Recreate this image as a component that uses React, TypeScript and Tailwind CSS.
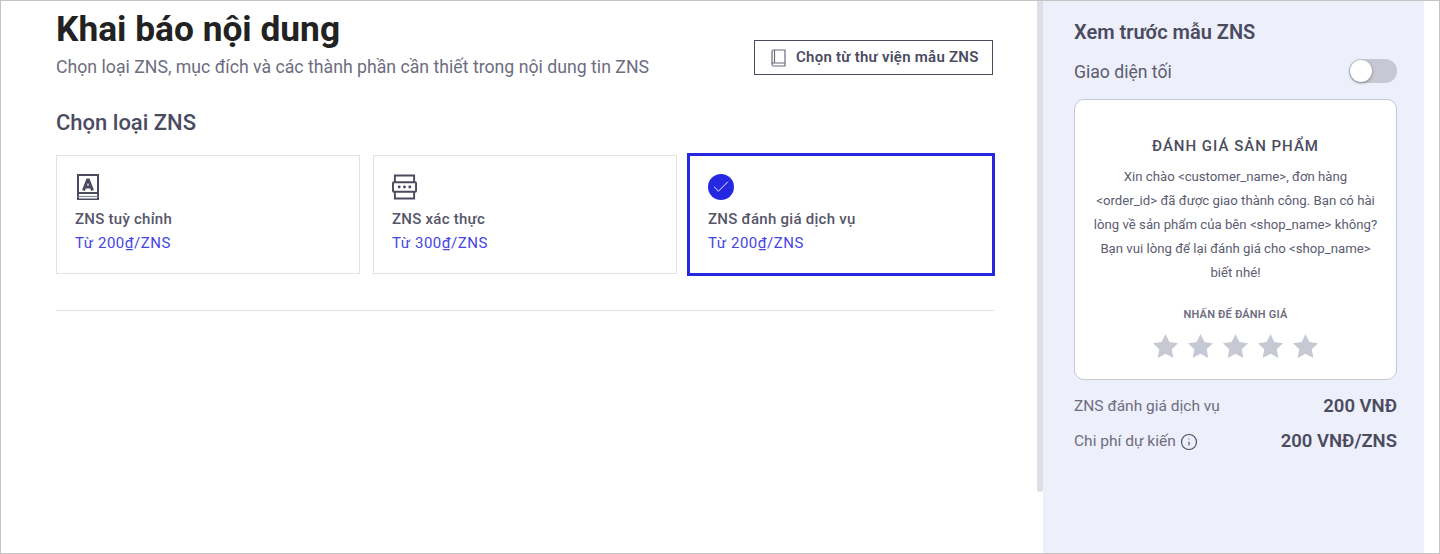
import { Check, Info } from 'lucide-react'

function TemplateIcon() {
  return (
    <svg width="24" height="26" viewBox="0 0 24 26" fill="none">
      <rect x="3" y="1" width="20" height="24.500" stroke="#4b4b60" strokeWidth="2" />
      <path d="M8.500 16.500l4-10.500h1l4 10.500M10 13h6" stroke="#4b4b60" strokeWidth="3" />
      <path d="M3 19h20" stroke="#4b4b60" strokeWidth="2" />
      <path d="M3 22.500h20" stroke="#8a8a9a" strokeWidth="1.200" />
    </svg>
  )
}

function AuthIcon() {
  return (
    <svg width="25" height="26" viewBox="0 0 26 26" fill="none" stroke="#4b4b60" strokeWidth="2">
      <path d="M3 8V1h20v7" />
      <path d="M3 18v7h20v-7" />
      <rect x="1" y="8" width="24" height="10" rx="1" />
      <circle cx="7.500" cy="13" r="1.500" fill="#4b4b60" stroke="none" />
      <circle cx="13" cy="13" r="1.500" fill="#4b4b60" stroke="none" />
      <circle cx="18.500" cy="13" r="1.500" fill="#4b4b60" stroke="none" />
    </svg>
  )
}

function Star() {
  return (
    <svg width="25" height="25" viewBox="0 0 25 25">
      <path d="M12.500 0l3.900 8.100 8.600 1.100-6.300 6 1.600 8.800-7.800-4.300-7.800 4.300 1.600-8.800-6.300-6 8.600-1.100z" fill="#c6c8d3" />
    </svg>
  )
}

function TypeCard({ icon, title, price }: { icon: React.ReactNode; title: string; price: string }) {
  return (
    <div className="w-[304px] h-[119px] flex-shrink-0 border border-[#e1e1e6] pl-[18px] pt-[18px]">
      <div className="h-[26px] flex items-center">{icon}</div>
      <p className="mt-[9px] text-[15px] leading-[20px] font-medium text-[#56566a] tracking-[0.26px]">{title}</p>
      <p className="mt-[4px] text-[15px] leading-[20px] text-[#4545e4] tracking-[0.55px]">{price}</p>
    </div>
  )
}

export default function App() {
  return (
    <div className="w-[1440px] h-[554px] border border-[#c4c4c4] bg-white flex overflow-hidden font-['Roboto',sans-serif]">
      <main className="w-[1036px] flex-shrink-0 pl-[55px] pr-[42px]">
        <div className="flex items-start justify-between mr-[2px]">
          <div>
            <h1 className="mt-[7px] text-[35.3px] leading-[42px] font-bold text-[#222222]">Khai báo nội dung</h1>
            <p className="mt-[4px] text-[17.7px] leading-[26px] text-[#6d6d80]">
              Chọn loại ZNS, mục đích và các thành phần cần thiết trong nội dung tin ZNS
            </p>
          </div>
          <button className="mt-[39px] w-[239px] h-[35px] border border-[#4b4b60] flex items-center pl-[16px] gap-[10px] text-[15px] font-semibold text-[#4b4b60] tracking-[0.25px]">
            <svg width="15" height="18" viewBox="0 0 15 18" fill="none" stroke="#6d6d80" strokeWidth="1.200">
              <path d="M1 15V2.500A1.500 1.500 0 012.500 1H14v13H2.500A1.500 1.500 0 001 15.500 1.500 1.500 0 002.500 17H14v-3" />
              <path d="M3.500 1v13" />
            </svg>
            Chọn từ thư viện mẫu ZNS
          </button>
        </div>
        <h2 className="mt-[28px] text-[22px] leading-[30px] font-medium text-[#4b4b60]">Chọn loại ZNS</h2>
        <div className="mt-[17px] flex items-center">
          <TypeCard icon={<TemplateIcon />} title="ZNS tuỳ chỉnh" price="Từ 200₫/ZNS" />
          <div className="w-[13px] flex-shrink-0" />
          <TypeCard icon={<AuthIcon />} title="ZNS xác thực" price="Từ 300₫/ZNS" />
          <div className="w-[10px] flex-shrink-0" />
          <div className="w-[308px] h-[123px] flex-shrink-0 border-[3px] border-[#2528e0] pl-[18px] pt-[18px] -my-[2px]">
            <div className="w-[26px] h-[26px] rounded-full bg-[#2528e0] flex items-center justify-center">
              <Check size={20} strokeWidth={1.1} className="text-white" />
            </div>
            <p className="mt-[9px] text-[15px] leading-[20px] font-medium text-[#56566a] tracking-[0.26px]">ZNS đánh giá dịch vụ</p>
            <p className="mt-[4px] text-[15px] leading-[20px] text-[#4545e4] tracking-[0.55px]">Từ 200₫/ZNS</p>
          </div>
        </div>
        <hr className="mt-[36px] w-[938px] border-t border-[#e1e1e6]" />
      </main>

      <div className="w-[6px] h-[491px] flex-shrink-0 bg-[#dedfe6] rounded-b-[3px]" />

      <aside className="w-[381px] flex-shrink-0 bg-[#edeffb] pl-[31px] pr-[27px] pt-[18px]">
        <h3 className="text-[20px] leading-[26px] font-semibold text-[#4b4b60]">Xem trước mẫu ZNS</h3>
        <div className="mt-[14px] flex items-start justify-between h-[24px]">
          <span className="mt-[1px] text-[17.6px] leading-[24px] text-[#5c5c70]">Giao diện tối</span>
          <div className="relative w-[48px] h-[24px] rounded-full bg-[#c6c8d3]">
            <div className="absolute left-[1px] top-[1px] w-[22px] h-[22px] rounded-full bg-white shadow-[0_1px_3px_rgba(0,0,0,0.4)]" />
          </div>
        </div>
        <div className="mt-[16px] h-[281px] rounded-[10px] bg-white border border-[#c6c8d3] px-[4px] pt-[36px] flex flex-col items-center text-center">
          <p className="text-[15px] leading-[20px] font-medium tracking-[1px] text-[#4b4b60]">ĐÁNH GIÁ SẢN PHẨM</p>
          <p className="mt-[9px] text-[13.2px] leading-[24px] text-[#5c5c70]">
            Xin chào &lt;customer_name&gt;, đơn hàng
            <br />
            &lt;order_id&gt; đã được giao thành công. Bạn có hài
            <br />
            lòng về sản phẩm của bên &lt;shop_name&gt; không?
            <br />
            Bạn vui lòng để lại đánh giá cho &lt;shop_name&gt;
            <br />
            biết nhé!
          </p>
          <p className="mt-[22px] text-[11px] leading-[16px] font-semibold tracking-[0.2px] text-[#6d6d80]">NHẤN ĐỂ ĐÁNH GIÁ</p>
          <div className="mt-[11px] flex gap-[10px]">
            <Star />
            <Star />
            <Star />
            <Star />
            <Star />
          </div>
        </div>
        <div className="mt-[15px] flex items-center justify-between h-[24px]">
          <span className="text-[15.5px] text-[#6d6d80]">ZNS đánh giá dịch vụ</span>
          <span className="text-[18.5px] font-semibold text-[#4b4b60]">200 VNĐ</span>
        </div>
        <div className="mt-[11px] flex items-center justify-between h-[24px]">
          <span className="flex items-center gap-[4px] text-[15.5px] text-[#6d6d80]">
            Chi phí dự kiến
            <Info size={18} strokeWidth={1.5} className="text-[#4b4b60]" />
          </span>
          <span className="text-[18.5px] font-semibold text-[#4b4b60]">200 VNĐ/ZNS</span>
        </div>
      </aside>
    </div>
  )
}
